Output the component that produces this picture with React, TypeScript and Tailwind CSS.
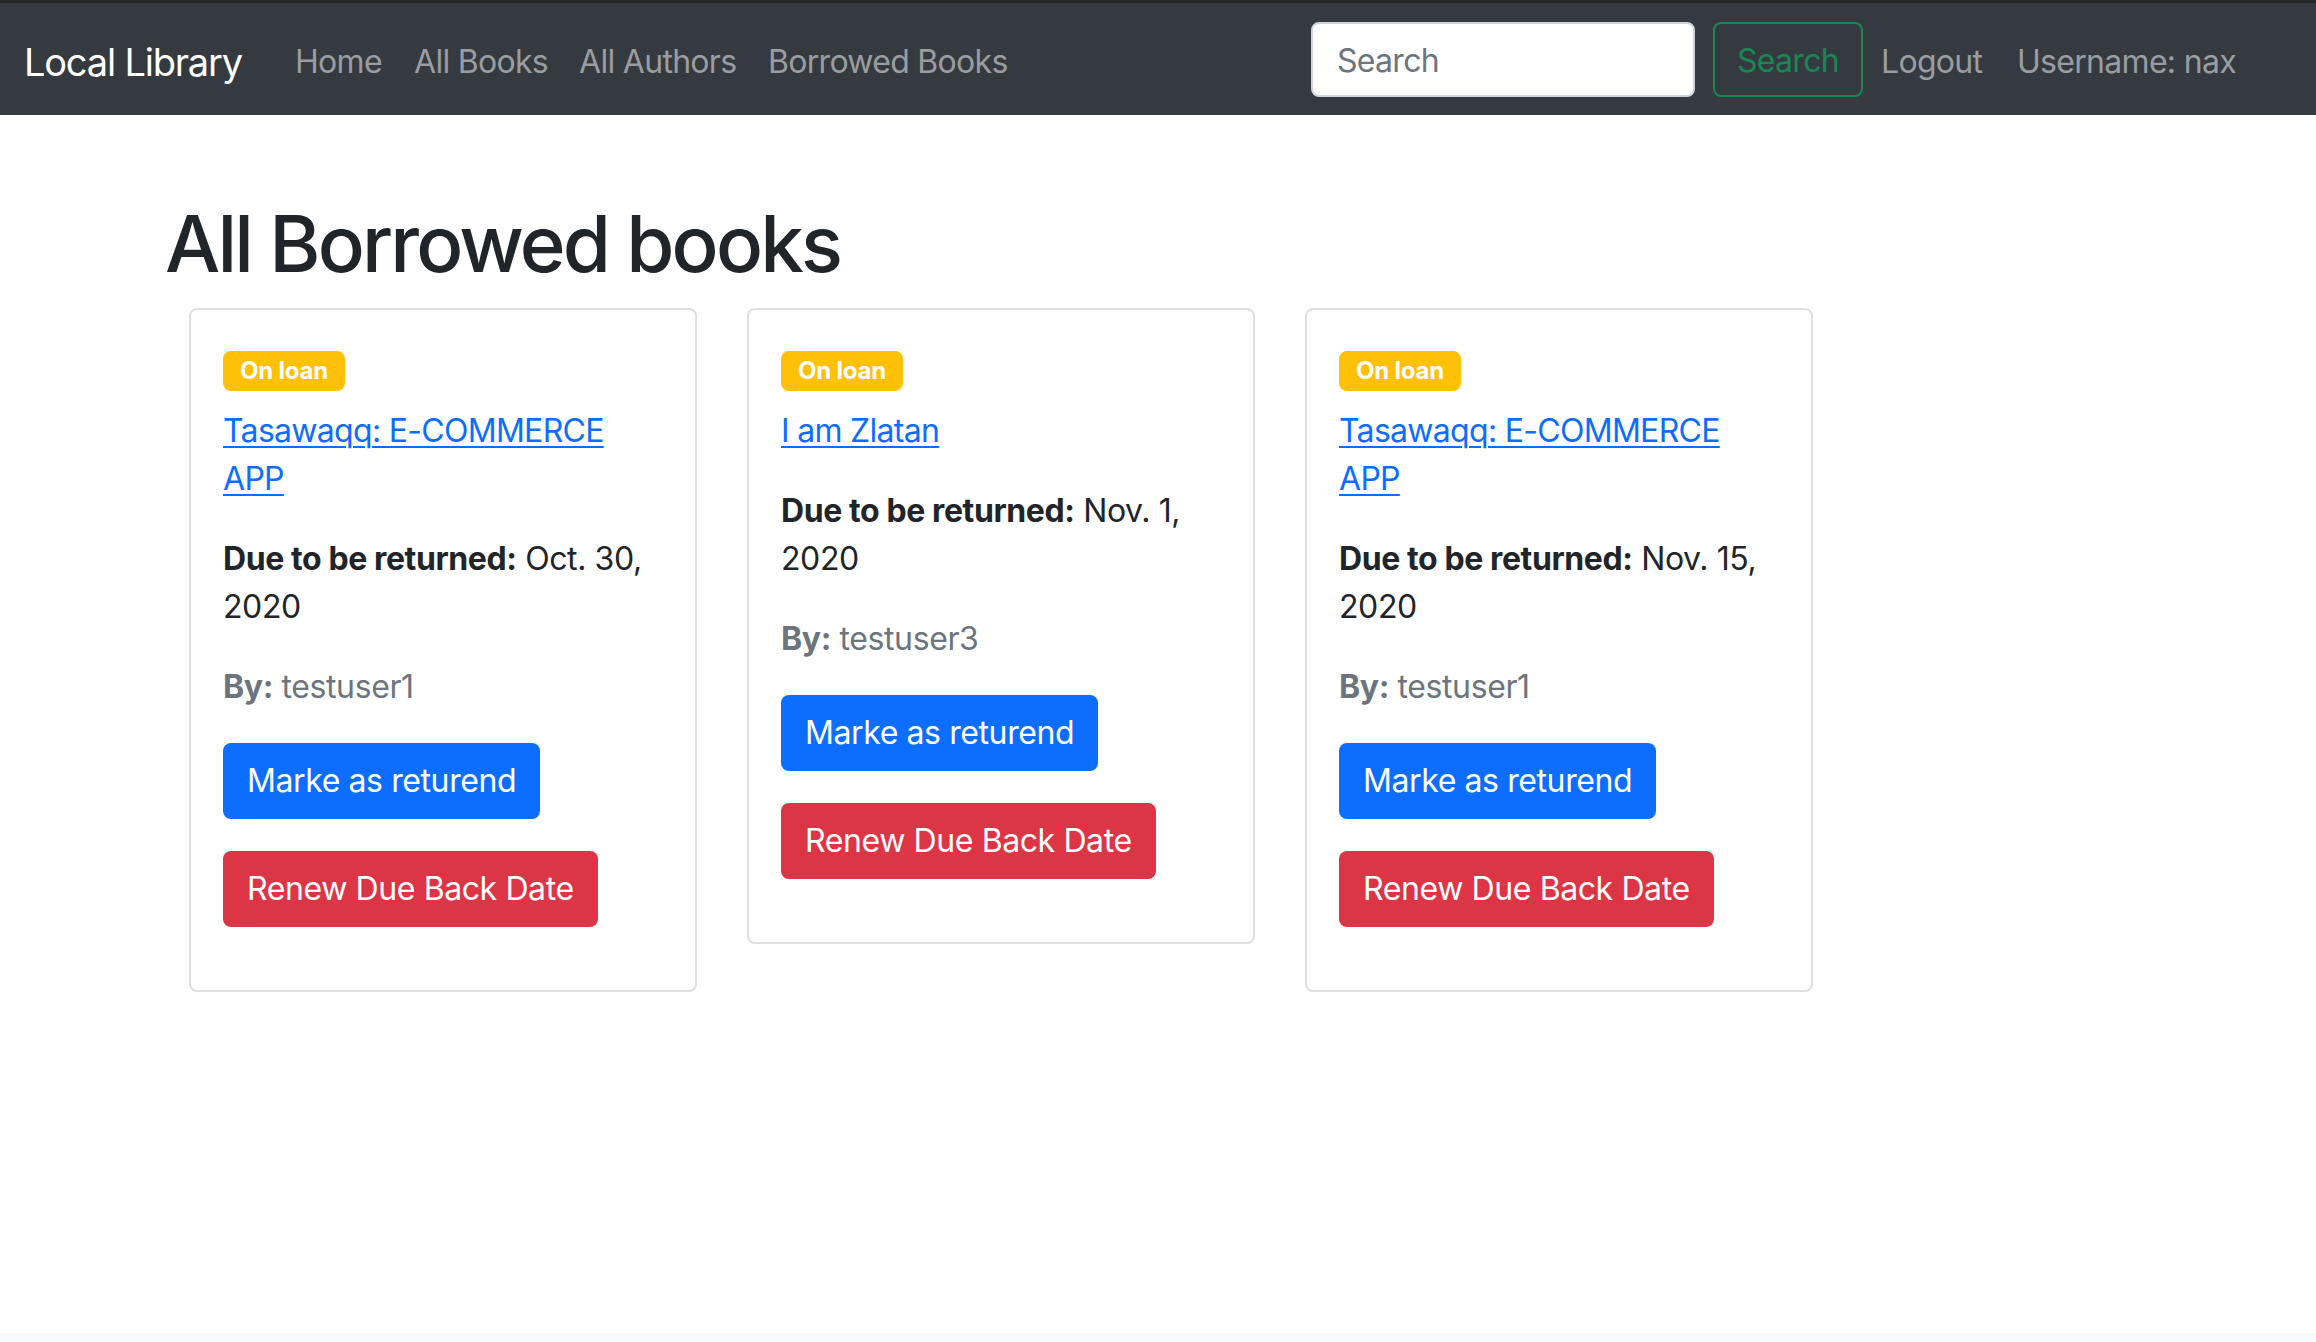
const loans = [
  { title: ["Tasawaqq: E-COMMERCE", "APP"], due: ["Oct. 30,", "2020"], by: "testuser1" },
  { title: ["I am Zlatan"], due: ["Nov. 1,", "2020"], by: "testuser3" },
  { title: ["Tasawaqq: E-COMMERCE", "APP"], due: ["Nov. 15,", "2020"], by: "testuser1" },
];

function LoanCard({ title, due, by }: { title: string[]; due: string[]; by: string }) {
  return (
    <div className="w-[508px] rounded-[8px] border-2 border-[#dfdfdf] bg-white px-[32px] pt-[33px] pb-[31px]">
      <div className="h-[48px] mb-[16px]">
        <span className="inline-block mt-[8px] h-[40px] px-[17px] rounded-[8px] bg-[#ffc107] text-white text-[24px] font-bold leading-[40px] tracking-[-0.2px]">
          On loan
        </span>
      </div>
      <p className="mb-[32px] tracking-[-0.7px]">
        {title.map((t, i) => (
          <span key={i}>
            <a href="#" className="text-[#0d6efd] underline decoration-2 underline-offset-[4px]">{t}</a>
            {i < title.length - 1 && <br />}
          </span>
        ))}
      </p>
      <p className="mb-[32px] text-[#212529]">
        <strong className="font-bold">Due to be returned:</strong> {due[0]}
        <br />
        {due[1]}
      </p>
      <p className="mb-[32px] text-[#6c757d]">
        <strong className="font-bold">By:</strong> {by}
      </p>
      <div className="mb-[32px]">
        <button className="h-[76px] px-[24px] rounded-[8px] bg-[#0d6efd] text-white">Marke as returend</button>
      </div>
      <div className="mb-[32px]">
        <button className="h-[76px] px-[24px] rounded-[8px] bg-[#dc3545] text-white">Renew Due Back Date</button>
      </div>
    </div>
  );
}

export default function App() {
  return (
    <div className="min-h-[1342px] flex flex-col bg-white text-[32px] leading-[48px] text-[#212529] font-['Inter','Noto_Sans',sans-serif] tracking-[-0.4px]">
      <nav className="h-[115px] border-t-[3px] border-[#25282b] bg-[#343a40] flex items-center pl-[24px] tracking-[-0.7px]">
        <a href="#" className="w-[271px] mt-[5px] text-[38px] text-white tracking-[-1.2px]">Local Library</a>
        <a href="#" className="w-[119px] mt-[5px] text-[#9a9da0]">Home</a>
        <a href="#" className="w-[165px] mt-[5px] text-[#9a9da0]">All Books</a>
        <a href="#" className="w-[189px] mt-[5px] text-[#9a9da0]">All Authors</a>
        <a href="#" className="w-[543px] mt-[5px] text-[#9a9da0]">Borrowed Books</a>
        <div className="w-[384px] h-[75px] rounded-[8px] border-2 border-[#ced4da] bg-white px-[24px] flex items-center text-[#6c757d]">
          <span className="mt-[3px]">Search</span>
        </div>
        <button className="ml-[18px] w-[150px] h-[75px] rounded-[8px] border-2 border-[#198754] text-[#198754]">
          <span className="relative top-[2px]">Search</span>
        </button>
        <a href="#" className="ml-[18px] w-[136px] mt-[5px] text-[#9a9da0]">Logout</a>
        <span className="mt-[5px] text-[#9a9da0]">Username: nax</span>
      </nav>
      <main className="flex-1 pl-[165px] pt-[81px]">
        <h1 className="text-[78px] leading-[96px] font-medium mb-[16px] tracking-[-2.8px]">All Borrowed books</h1>
        <div className="ml-[24px] flex items-start gap-[50px]">
          {loans.map((l, i) => (
            <LoanCard key={i} {...l} />
          ))}
        </div>
      </main>
      <div className="h-[9px] bg-[#f8f9fa]" />
    </div>
  );
}
